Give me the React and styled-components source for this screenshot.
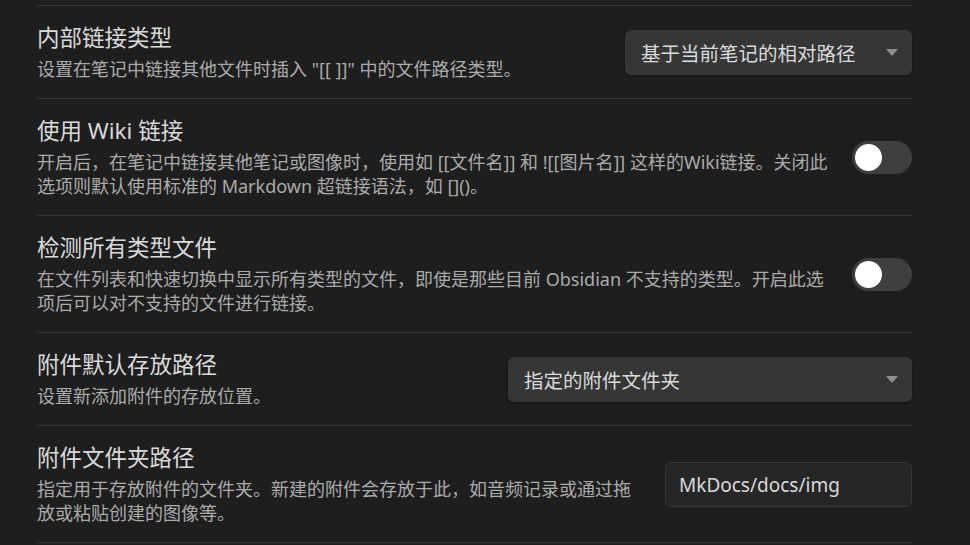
import styled, { createGlobalStyle } from 'styled-components';

const GlobalStyle = createGlobalStyle`
    html, body {
        margin: 0;
        padding: 0;
        background-color: #1e1e1e;
    }
    body {
        font-family: "Noto Sans", "Noto Sans CJK SC", sans-serif;
        color: #dadada;
    }
`;

const App = () => {
    return (
        <>
            <GlobalStyle/>
            <SettingsArea>
                {settingItems.map((item) =>
                    <SettingRow key={item.id}>
                        <InfoBox>
                            <SettingName>{item.name}</SettingName>
                            <SettingDesc>
                                {item.desc.map((line, i) =>
                                    <DescLine key={i}>{line}</DescLine>
                                )}
                            </SettingDesc>
                        </InfoBox>
                        {item.type === "select" &&
                            <Dropdown width={item.width}>
                                <span>{item.value}</span>
                                <Caret/>
                            </Dropdown>
                        }
                        {item.type === "toggle" &&
                            <Toggle>
                                <Knob/>
                            </Toggle>
                        }
                        {item.type === "text" &&
                            <TextInput type="text" defaultValue={item.value}/>
                        }
                    </SettingRow>
                )}
            </SettingsArea>
        </>
    )
}

const settingItems = [
    {
        id: 1,
        name: "内部链接类型",
        desc: ["设置在笔记中链接其他文件时插入 \"[[ ]]\" 中的文件路径类型。"],
        type: "select",
        value: "基于当前笔记的相对路径",
        width: "287px",
    },
    {
        id: 2,
        name: "使用 Wiki 链接",
        desc: [
            "开启后，在笔记中链接其他笔记或图像时，使用如 [[文件名]] 和 ![[图片名]] 这样的Wiki链接。关闭此",
            "选项则默认使用标准的 Markdown 超链接语法，如 []()。",
        ],
        type: "toggle",
    },
    {
        id: 3,
        name: "检测所有类型文件",
        desc: [
            "在文件列表和快速切换中显示所有类型的文件，即使是那些目前 Obsidian 不支持的类型。开启此选",
            "项后可以对不支持的文件进行链接。",
        ],
        type: "toggle",
    },
    {
        id: 4,
        name: "附件默认存放路径",
        desc: ["设置新添加附件的存放位置。"],
        type: "select",
        value: "指定的附件文件夹",
        width: "404px",
    },
    {
        id: 5,
        name: "附件文件夹路径",
        desc: [
            "指定用于存放附件的文件夹。新建的附件会存放于此，如音频记录或通过拖",
            "放或粘贴创建的图像等。",
        ],
        type: "text",
        value: "MkDocs/docs/img",
    },
];

const SettingsArea = styled.div`
    box-sizing: border-box;
    width: 970px;
    padding: 5px 58px 0 37px;
`;

const SettingRow = styled.div`
    display: flex;
    align-items: center;
    justify-content: space-between;
    border-top: 1px solid #363636;
    padding: 18px 0 17px 0;
    &:last-child {
        border-bottom: 1px solid #363636;
    }
`;

const InfoBox = styled.div`
    flex: 1 1 auto;
    margin-right: 20px;
`;

const SettingName = styled.div`
    font-size: 22.5px;
    line-height: 28px;
    color: #dadada;
`;

const SettingDesc = styled.div`
    margin-top: 5px;
    font-size: 18px;
    line-height: 24px;
    color: #ababab;
`;

const DescLine = styled.div`
    white-space: nowrap;
`;

const Dropdown = styled.div`
    box-sizing: border-box;
    flex: 0 0 auto;
    width: ${(props) => props.width};
    height: 45px;
    display: flex;
    align-items: center;
    justify-content: space-between;
    padding: 0 14px 0 16px;
    background-color: #363636;
    border-radius: 6px;
    box-shadow: 0 1px 3px rgba(0, 0, 0, 0.35);
    font-size: 19.5px;
    color: #dadada;
`;

const Caret = styled.div`
    width: 0;
    height: 0;
    border-left: 6px solid transparent;
    border-right: 6px solid transparent;
    border-top: 7px solid #8f8f8f;
`;

const Toggle = styled.div`
    box-sizing: border-box;
    flex: 0 0 auto;
    width: 60px;
    height: 33px;
    border-radius: 17px;
    background-color: #3f3f3f;
    display: flex;
    align-items: center;
    padding-left: 3px;
`;

const Knob = styled.div`
    width: 27px;
    height: 27px;
    border-radius: 50%;
    background-color: #ffffff;
`;

const TextInput = styled.input`
    box-sizing: border-box;
    flex: 0 0 auto;
    width: 247px;
    height: 45px;
    padding: 0 13px;
    background-color: #262626;
    border: 1px solid #363636;
    border-radius: 6px;
    font-family: "Noto Sans", "Noto Sans CJK SC", sans-serif;
    font-size: 19px;
    color: #dadada;
    &:focus { outline: none; }
`;

export default App;
